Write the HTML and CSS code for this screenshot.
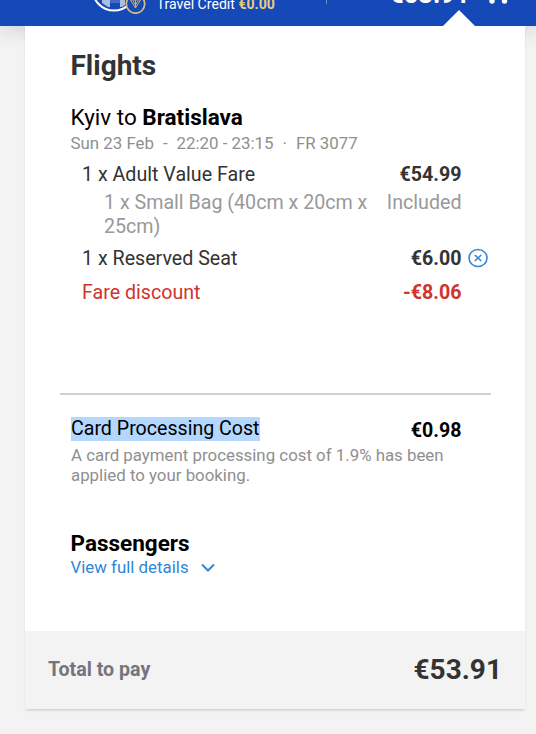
FILE: index.html
```
<!DOCTYPE html>
<html lang="en">
<head>
  <meta charset="utf-8">
  <title>Your trip</title>
  <link rel="stylesheet" href="styles.css">
</head>
<body>
  <header class="header">
    <div class="account">
      <svg class="avatar" width="56" height="50" viewBox="0 0 56 50">
        <circle cx="22" cy="25" r="21.500" fill="#1549b5" stroke="#fff" stroke-width="2"/>
        <path d="M10 36h8v7h-2l-6-4zM28 36h5v5l-3 2h-2z" fill="#a9bde6"/>
        <path d="M18 36h10v3H18z" fill="#4269c4"/>
        <circle cx="43.500" cy="40" r="9.200" fill="#1549b5" stroke="#d3bf88" stroke-width="1.700"/>
        <path d="M38.500 36h10l-5 8zM41 37l2.500 4 2.500-4M43.500 36v8" fill="none" stroke="#c9b06c"/>
      </svg>
      <span class="credit">Travel Credit <b>€0.00</b></span>
    </div>
    <span class="separator"></span>
    <div class="basket">
      <span class="basket-price">€53.91</span>
      <svg width="24" height="24" viewBox="0 0 24 24" fill="none" stroke="#fff" stroke-width="2">
        <path d="M1 3h4l3 11h11l3-8H6"/>
        <circle cx="7" cy="19" r="2.700" fill="#fff" stroke="none"/>
        <circle cx="19.500" cy="19" r="2.700" fill="#fff" stroke="none"/>
      </svg>
    </div>
  </header>

  <main class="summary">
    <div class="arrow"></div>
    <section class="flights">
      <h2>Flights</h2>
      <h3 class="route">Kyiv to <b>Bratislava</b></h3>
      <p class="flight-info"><span>Sun 23 Feb</span><span class="dash">-</span><span>22:20 - 23:15</span><span class="dot">·</span><span>FR 3077</span></p>
      <ul class="items">
        <li class="item">
          <span>1 x Adult Value Fare</span>
          <span class="price">€54.99</span>
        </li>
        <li class="item bag">
          <span class="bag-name">1 x Small Bag (40cm x 20cm x 25cm)</span>
          <span>Included</span>
        </li>
        <li class="item seat">
          <span>1 x Reserved Seat</span>
          <span class="price">€6.00</span>
          <svg class="remove" width="20" height="20" viewBox="0 0 20 20" fill="none" stroke="#3186d6" stroke-width="1.600">
            <ellipse cx="10" cy="10" rx="9" ry="8.500"/>
            <path d="M6.800 7l6.400 6M13.200 7l-6.400 6"/>
          </svg>
        </li>
        <li class="item discount">
          <span>Fare discount</span>
          <span class="price">-€8.06</span>
        </li>
      </ul>
    </section>

    <hr>

    <section class="card-cost">
      <div class="card-row">
        <span class="selected">Card Processing Cost</span>
        <span class="price">€0.98</span>
      </div>
      <p>A card payment processing cost of 1.9% has been<br>applied to your booking.</p>
    </section>

    <section class="passengers">
      <h3>Passengers</h3>
      <a class="details">
        <span>View full details</span>
        <svg width="14" height="9" viewBox="0 0 14 9" fill="none" stroke="#3186d6" stroke-width="2">
          <path d="M1 1.500l6 6 6-6"/>
        </svg>
      </a>
    </section>

    <footer class="total">
      <span class="total-label">Total to pay</span>
      <span class="total-price">€53.91</span>
    </footer>
  </main>
</body>
</html>
```

FILE: styles.css
```
body {
  margin: 0;
  height: 734px;
  overflow: hidden;
  background-color: #f3f3f3;
  font-family: Roboto, sans-serif;
  color: #333;
}

h2, h3, p, ul {
  margin: 0;
  padding: 0;
}

.header {
  display: flex;
  align-items: flex-end;
  box-sizing: border-box;
  height: 26px;
  background-color: #1549b8;
  box-shadow: 0 0 24px rgba(0, 0, 0, 0.2);
  color: white;
  padding-left: 92px;
}

.account {
  display: flex;
  align-items: flex-end;
  width: 234px;
}

.avatar {
  flex: none;
  margin-bottom: 12px;
}

.credit {
  margin: 0 0 13px 8.5px;
  font-size: 14.1px;
  line-height: 18px;
  white-space: nowrap;
}

.credit b {
  color: #e9cf7c;
}

.separator {
  width: 1px;
  height: 20px;
  margin-bottom: 22px;
  background-color: #6f8fc0;
}

.basket {
  display: flex;
  align-items: flex-end;
  margin: 0 0 20px 63px;
}

.basket-price {
  width: 96px;
  margin: 0 0 -2px -1px;
  font-size: 25.5px;
  font-weight: 700;
  line-height: 28px;
}

.summary {
  position: relative;
  width: 500px;
  height: 683px;
  margin-left: 25px;
  display: flex;
  flex-direction: column;
  background-color: white;
  box-shadow: 0 2px 3px -1px rgba(0, 0, 0, 0.2);
}

.arrow {
  position: absolute;
  top: -16px;
  left: 418px;
  border: 16px solid transparent;
  border-top: none;
  border-bottom-color: white;
}

.flights {
  box-sizing: border-box;
  height: 367px;
  padding: 23px 34.5px 0 45.5px;
}

h2 {
  font-size: 28px;
  line-height: 34px;
}

.route {
  margin-top: 20px;
  font-size: 22.5px;
  font-weight: 400;
  line-height: 28px;
  color: black;
}

.flight-info {
  display: flex;
  font-size: 16.85px;
  line-height: 24px;
  color: #8f8f8f;
}

.dash {
  margin: 0 9px;
}

.dot {
  margin: 0 9px;
}

.items {
  list-style: none;
  margin-top: 1px;
  padding-left: 11.5px;
  font-size: 19.65px;
  line-height: 24px;
}

.item {
  display: flex;
  justify-content: space-between;
  padding: 7px 29px 0 0;
}

.price {
  font-weight: 700;
}

.bag {
  padding-top: 4px;
  padding-left: 22px;
  color: #999;
}

.bag-name {
  width: 270px;
}

.seat {
  padding-top: 8px;
  position: relative;
}

.remove {
  position: absolute;
  right: 2.5px;
  top: 9px;
}

.discount {
  padding-top: 10px;
  color: #d0342c;
}

hr {
  width: 431px;
  height: 2px;
  margin: 0 0 0 35px;
  border: none;
  background-color: #d1d1d1;
}

.card-cost {
  padding: 22px 63.5px 0 46px;
  height: 92px;
}

.card-row {
  display: flex;
  justify-content: space-between;
  font-size: 19.6px;
  line-height: 24px;
  color: black;
}

.card-row .price {
  margin-top: 2px;
  margin-bottom: -2px;
}

.selected {
  background-color: #b3d7ff;
}

.card-cost p {
  margin-top: 4px;
  font-size: 16.85px;
  line-height: 20px;
  color: #8f8f8f;
  white-space: nowrap;
}

.passengers {
  padding: 21px 45.5px 0;
}

.passengers h3 {
  font-size: 22.5px;
  line-height: 26px;
  color: black;
}

.details {
  display: flex;
  align-items: center;
  gap: 12px;
  font-size: 16.85px;
  line-height: 22px;
  color: #3186d6;
}

.total {
  display: flex;
  align-items: center;
  justify-content: space-between;
  box-sizing: border-box;
  height: 78px;
  margin-top: auto;
  padding: 0 23px 2px;
  background-color: #f3f3f3;
}

.total-label {
  font-size: 19.6px;
  font-weight: 700;
  color: #73757d;
}

.total-price {
  font-size: 28px;
  font-weight: 700;
}
```
